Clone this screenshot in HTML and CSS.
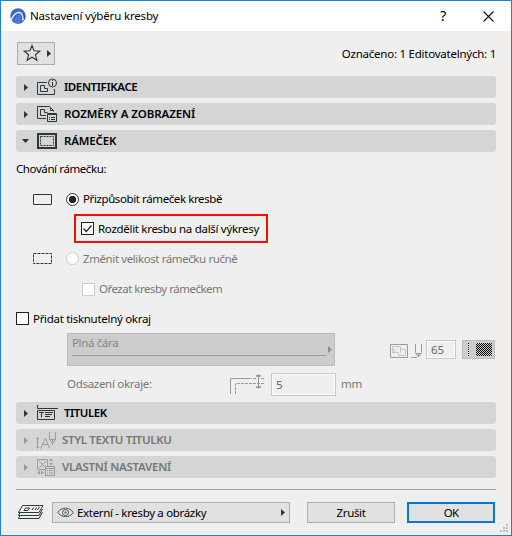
FILE: index.html
```html
<!DOCTYPE html>
<html lang="cs">
<head>
<meta charset="utf-8">
<title>Nastavení výběru kresby</title>
<link rel="stylesheet" href="styles.css">
</head>
<body>
<div class="window">
  <header class="titlebar">
    <svg class="logo" width="16" height="16" viewBox="0 0 16 16"><defs><linearGradient id="g" x1="0" y1="0" x2="1" y2="1"><stop offset="0" stop-color="#3c63b8"/><stop offset=".5" stop-color="#4068c0"/><stop offset="1" stop-color="#203f91"/></linearGradient></defs><circle cx="8" cy="8" r="7.700" fill="url(#g)"/><path d="M1 12.500C3 7.500 6 4 9.500 4.500c2.500.6 3.500 3.500 3.500 7.500" fill="none" stroke="#dce9fc" stroke-width="1.400"/><path d="M3 14C5 10 7 7 9 6.500c2 0 2.800 3 2.800 7-2 2.200-6 2.500-8.800.5z" fill="#4a78d8"/><path d="M12 11.500h2M12 13h1.500" stroke="#dce9fc"/></svg>
    <h1 class="title">Nastavení výběru kresby</h1>
    <span class="help">?</span>
    <svg class="close" width="11" height="11" viewBox="0 0 11 11" fill="none" stroke="#111" stroke-width="1.100"><path d="M.5.5l10 10M10.500.5l-10 10"/></svg>
  </header>
  <main class="content">
    <div class="toolbar">
      <button class="btn fav">
        <svg width="36" height="21" viewBox="0 0 36 21"><path d="M14 2.500l2.100 5.200 5.700.4-4.400 3.600 1.500 5.600-4.900-3.100-4.900 3.100 1.500-5.600-4.400-3.600 5.700-.4z" fill="none" stroke="#2b383e" stroke-width="1.100"/><path d="M29 7v7l4-3.500z" fill="#333"/></svg>
      </button>
      <span class="count">Označeno: 1 Editovatelných: 1</span>
    </div>

    <div class="section">
      <svg class="arrow" width="4" height="7" viewBox="0 0 4 7"><path d="M0 0v7l4-3.500z" fill="#333"/></svg>
      <svg class="sicon" width="20" height="18" viewBox="0 0 20 18" fill="none" stroke="#2b383e"><path d="M10 4.500H.5v12h17V11M3.500 7.500h4v3h3v3h-7z"/><circle cx="15.500" cy="5" r="4"/><path d="M15.500 2v1M15.500 4v4"/></svg>
      <h2 class="name id">IDENTIFIKACE</h2>
    </div>
    <div class="section">
      <svg class="arrow" width="4" height="7" viewBox="0 0 4 7"><path d="M0 0v7l4-3.500z" fill="#333"/></svg>
      <svg class="sicon" width="20" height="18" viewBox="0 0 20 18" fill="none" stroke="#2b383e"><path d="M9 13.500H.5V1.500h12l4 4v1M13.500 2v3.500h3M3.500 4.500h4v3h3M3.500 4.500v6H9M10.500 8.500h9v8h-9zM10.500 9.500h9M12 12.500h1M14 12.500h4M12 14.500h1M14 14.500h4"/></svg>
      <h2 class="name dim">ROZMĚRY A ZOBRAZENÍ</h2>
    </div>
    <div class="section">
      <svg class="arrow open" width="7" height="4" viewBox="0 0 7 4"><path d="M0 0h7l-3.500 4z" fill="#333"/></svg>
      <svg class="sicon" width="20" height="16" viewBox="0 0 20 16" fill="none" stroke="#2b383e"><path d="M1 1h18v14H1z" stroke-width="2"/><path d="M3.500 3.500h13v9h-13z" stroke-dasharray="2 1"/></svg>
      <h2 class="name frame">RÁMEČEK</h2>
    </div>

    <div class="panel">
      <p class="row caption"><span class="t-caption">Chování rámečku:</span></p>
      <div class="row radio-row">
        <svg width="19" height="11" viewBox="0 0 19 11"><path d="M.5.5h18v10H.5z" fill="none" stroke="#2b383e"/></svg>
        <span class="radio on"></span><label class="t-fit">Přizpůsobit rámeček kresbě</label>
      </div>
      <div class="highlight">
        <span class="check"><svg width="11" height="11" viewBox="0 0 11 11"><path d="M1.500 5.500l2.800 3L9.500 2.500" fill="none" stroke="#222" stroke-width="1.200"/></svg></span><label class="t-split">Rozdělit kresbu na další výkresy</label>
      </div>
      <div class="row radio-row off manual">
        <svg width="19" height="11" viewBox="0 0 19 11"><path d="M.5.5h18v10H.5z" fill="none" stroke="#2b383e" stroke-dasharray="3 1"/></svg>
        <span class="radio"></span><label class="t-manual">Změnit velikost rámečku ručně</label>
      </div>
      <div class="row crop off"><span class="check"></span><label class="t-crop">Ořezat kresby rámečkem</label></div>
      <div class="row edge"><span class="check"></span><label class="t-edge">Přidat tisknutelný okraj</label></div>
      <div class="row line-row off">
        <div class="line-select"><span class="t-line">Plná čára</span><div class="stroke"></div><svg class="line-arrow" width="4" height="7" viewBox="0 0 4 7"><path d="M0 0v7l4-3.500z" fill="#8e8e8e"/></svg></div>
        <svg class="pen" width="33" height="18" viewBox="0 0 33 18" fill="none" stroke="#969c9e"><path d="M.5 3.500h17v13H.5z"/><path d="M2.500 5.500h8v3h5v6h-7v-3h-6zM2.500 7.500l3 2-3 2M10.500 8.500v3" stroke="#c3c6c7"/><path d="M25.500 3v8.500l2.500 4h1l2.500-4V3M25.500 12.500h6M28.500 12.500v3M21 16.500h6"/></svg>
        <div class="field pen-no">65</div>
        <div class="pattern"><svg width="31" height="17" viewBox="0 0 31 17"><defs><pattern id="c" width="2" height="2" patternUnits="userSpaceOnUse"><path d="M0 0h1v1H0zM1 1h1v1H1z" fill="#000"/><path d="M1 0h1v1H1zM0 1h1v1H0z" fill="#d0d0d0"/></pattern></defs><path d="M5.500 2v13" stroke="#fff"/><path d="M5.500 2v13" stroke="#000" stroke-dasharray="1 1"/><rect x="13" y="2" width="16" height="13" rx="1" fill="url(#c)"/></svg></div>
      </div>
      <div class="row offset off">
        <span class="t-offset">Odsazení okraje:</span>
        <svg width="34" height="20" viewBox="0 0 34 20" fill="none" stroke="#969c9e"><path d="M.5 20V4.500h21M23 4.500h3M31 4.500h3"/><path d="M5.500 20V9.500H34" stroke-dasharray="3 1"/><path d="M28.500 1v13M26 1.500h5M26 13.500h5"/><path d="M26 3h5l-2.500-3zM26 12h5l-2.500 3z" fill="#969c9e" stroke="none"/></svg>
        <div class="field dist">5</div><span class="t-mm">mm</span>
      </div>
    </div>

    <div class="section">
      <svg class="arrow" width="4" height="7" viewBox="0 0 4 7"><path d="M0 0v7l4-3.500z" fill="#333"/></svg>
      <svg class="sicon tall" width="21" height="16" viewBox="0 0 21 16" fill="none" stroke="#2b383e"><path d="M.5 0v3.500H21M.5 5.500h17v9H.5zM2 7.500h5M4.500 7.500v5M8 7.500h8M8 9.500h7M8 11.500h5"/></svg>
      <h2 class="name cap">TITULEK</h2>
    </div>
    <div class="section off">
      <svg class="arrow" width="4" height="7" viewBox="0 0 4 7"><path d="M0 0v7l4-3.500z" fill="#999"/></svg>
      <svg class="sicon wide" width="20" height="17" viewBox="0 0 20 17" fill="none" stroke="#989d9f"><path d="M1.500 6v10M0 7.500L1.500 5.500 3 7.500M0 14.500l1.500 2 1.500-2M4.500 16.500L9.500 6l4 10.500M6.500 12.500h5.500M13.500 0v7l2.500 4h1l2.500-4V0M13.500 7.500h6M16.500 8v5"/></svg>
      <h2 class="name style">STYL TEXTU TITULKU</h2>
    </div>
    <div class="section off">
      <svg class="arrow" width="4" height="7" viewBox="0 0 4 7"><path d="M0 0v7l4-3.500z" fill="#999"/></svg>
      <svg class="sicon own" width="18" height="17" viewBox="0 0 18 17" fill="none" stroke="#989d9f"><path d="M8 10.500H.5V.5h10V7M2 2l7 7M9 2L2 9"/><path d="M8.500 7.500h9v9h-9zM9 9.500h8M10 11.500h1M12 11.500h4M10 14h1M12 14h4"/><path d="M12 2h4l-2-2.500zM12 4h4l-2 2.500zM3 11.500v4L0 13.500zM4 11.500v4l3-2z" fill="#989d9f" stroke="none"/></svg>
      <h2 class="name custom">VLASTNÍ NASTAVENÍ</h2>
    </div>
  </main>
  <footer class="footer">
    <svg class="layers" width="26" height="15" viewBox="0 0 26 15" fill="none" stroke="#2b383e"><path d="M4.500.5h20.500l-4 7H.5zM24.500 4l-3.500 6.500H.5l1.500-3M24.500 7l-3.500 6.500H.5l1.500-3M6 5.500L7.500 3h4L10 5.500zM14 5l1.500-2.500M17 5l1.500-2.500M19.500 5L21.500 2"/></svg>
    <button class="btn layer">
      <svg width="17" height="11" viewBox="0 0 17 11" fill="none" stroke="#4b565b"><path d="M.8 5.500C4-.3 13-.3 16.200 5.500 13 11 4 11 .8 5.500z"/><circle cx="8.500" cy="5.500" r="3"/><circle cx="8.500" cy="5.500" r=".7"/></svg>
      <span class="t-layer">Externí - kresby a obrázky</span>
      <svg class="more" width="4" height="7" viewBox="0 0 4 7"><path d="M0 0v7l4-3.500z" fill="#333"/></svg>
    </button>
    <button class="btn cancel">Zrušit</button>
    <button class="btn ok">OK</button>
  </footer>
  <svg class="grip" width="8" height="8" viewBox="0 0 8 8" fill="#bcbcbc"><path d="M6 0h2v2H6zM3 3h2v2H3zM6 3h2v2H6zM0 6h2v2H0zM3 6h2v2H3zM6 6h2v2H6z"/></svg>
</div>
</body>
</html>
```
FILE: styles.css
```css
* { box-sizing: border-box; }
body { margin: 0; font: 11.5px/16px "Noto Sans", "Open Sans", sans-serif; letter-spacing: -0.35px; color: #000; }
svg { display: block; flex: none; }
h1, h2, p { margin: 0; font-size: inherit; font-weight: normal; }
span, label, h1, h2 { white-space: nowrap; }
.window { position: relative; width: 512px; height: 536px; border: 1px solid #1883d7; background: #efefef; display: flex; flex-direction: column; }
.titlebar { height: 30px; background: #fff; display: flex; align-items: center; padding: 0 17px 0 9px; flex: none; }
.title { margin-left: 4px; letter-spacing: -0.17px; }
.help { margin-left: auto; font-size: 14px; margin-right: 37px; }
.content { padding: 0 15px; }
.toolbar { height: 45px; display: flex; align-items: center; justify-content: space-between; }
.count { letter-spacing: -0.24px; }
.btn { font: inherit; letter-spacing: inherit; color: #000; padding: 0; border: 1px solid #adadad; background: #e1e1e1; display: flex; align-items: center; justify-content: center; }
.fav { width: 38px; height: 23px; margin-left: 1px; }
.section { height: 22px; margin-bottom: 5px; background: #d5d5d5; border-radius: 3px; display: flex; align-items: center; }
.arrow { margin-left: 8px; margin-right: 9px; }
.arrow.open { margin-left: 6px; margin-right: 8px; }
.sicon { margin-right: 7px; }
.sicon.tall { margin-right: 6px; }
.sicon.wide { margin-left: -1px; margin-right: 6px; }
.name { font-weight: 600; }
.id { letter-spacing: -0.4px; }
.dim { letter-spacing: -0.08px; }
.frame { letter-spacing: -0.18px; }
.cap { letter-spacing: -0.5px; }
.style { letter-spacing: -0.34px; }
.custom { letter-spacing: -0.28px; }
.off { color: #777; }
.row { display: flex; align-items: center; }
.panel { height: 245px; }
.caption { height: 24px; letter-spacing: -0.4px; }
.radio-row { height: 26px; padding-left: 17px; letter-spacing: -0.4px; margin-top: 5px; }
.radio { width: 13px; height: 13px; border: 1px solid #333; border-radius: 50%; background: #fff; margin: 0 4px 0 14px; flex: none; }
.radio.on { background: radial-gradient(circle, #222 3.4px, #fff 4px); }
.off .radio, .off .check { border-color: #ccc; }
.check { width: 13px; height: 13px; border: 1px solid #222; background: #fff; flex: none; }
.highlight { width: 194px; height: 29px; margin: 2px 0 0 58px; border: 2px solid #f80c0c; padding-left: 5px; display: flex; align-items: center; gap: 4px; letter-spacing: -0.3px; }
.manual { height: 31px; margin-top: 0; }
.crop { height: 30px; padding-left: 66px; gap: 4px; letter-spacing: -0.5px; }
.edge { height: 29px; gap: 4px; letter-spacing: -0.3px; }
.line-row { height: 33px; padding-left: 51px; }
.line-select { position: relative; width: 268px; height: 33px; border: 1px solid #bcbcbc; background: #ccc; padding: 1px 8px 0 4px; color: #858585; }
.stroke { height: 1px; background: #999; margin-top: 4px; }
.line-arrow { position: absolute; right: 2px; top: 12px; }
.pen { margin-left: 55px; }
.field { border: 1px solid #c8c8c8; box-shadow: inset 0 0 0 1px #fff; background: #efefef; color: #666; padding-left: 4px; }
.pen-no { width: 30px; height: 19px; line-height: 18px; margin-left: 3px; letter-spacing: 0; }
.pattern { width: 33px; height: 19px; border: 1px solid #bcbcbc; background: #ccc; margin-left: 6px; }
.offset { height: 36px; padding-left: 51px; }
.t-offset { width: 163px; letter-spacing: -0.3px; }
.dist { width: 65px; height: 23px; line-height: 21px; margin-left: 7px; }
.t-mm { margin-left: 5px; }
.footer { margin: 6px 15px 0; border-top: 1px solid #a0a0a0; padding: 12px 1px 0 2px; display: flex; align-items: center; }
.layer { width: 238px; height: 21px; margin-left: 8px; padding: 0 4px; justify-content: flex-start; gap: 3px; }
.t-layer { letter-spacing: -0.33px; }
.more { margin-left: auto; }
.cancel { width: 88px; height: 21px; margin-left: 17px; }
.ok { width: 88px; height: 21px; margin-left: 12px; border: 2px solid #0078d7; letter-spacing: -0.8px; }
.grip { position: absolute; right: 3px; bottom: 3px; }
```
